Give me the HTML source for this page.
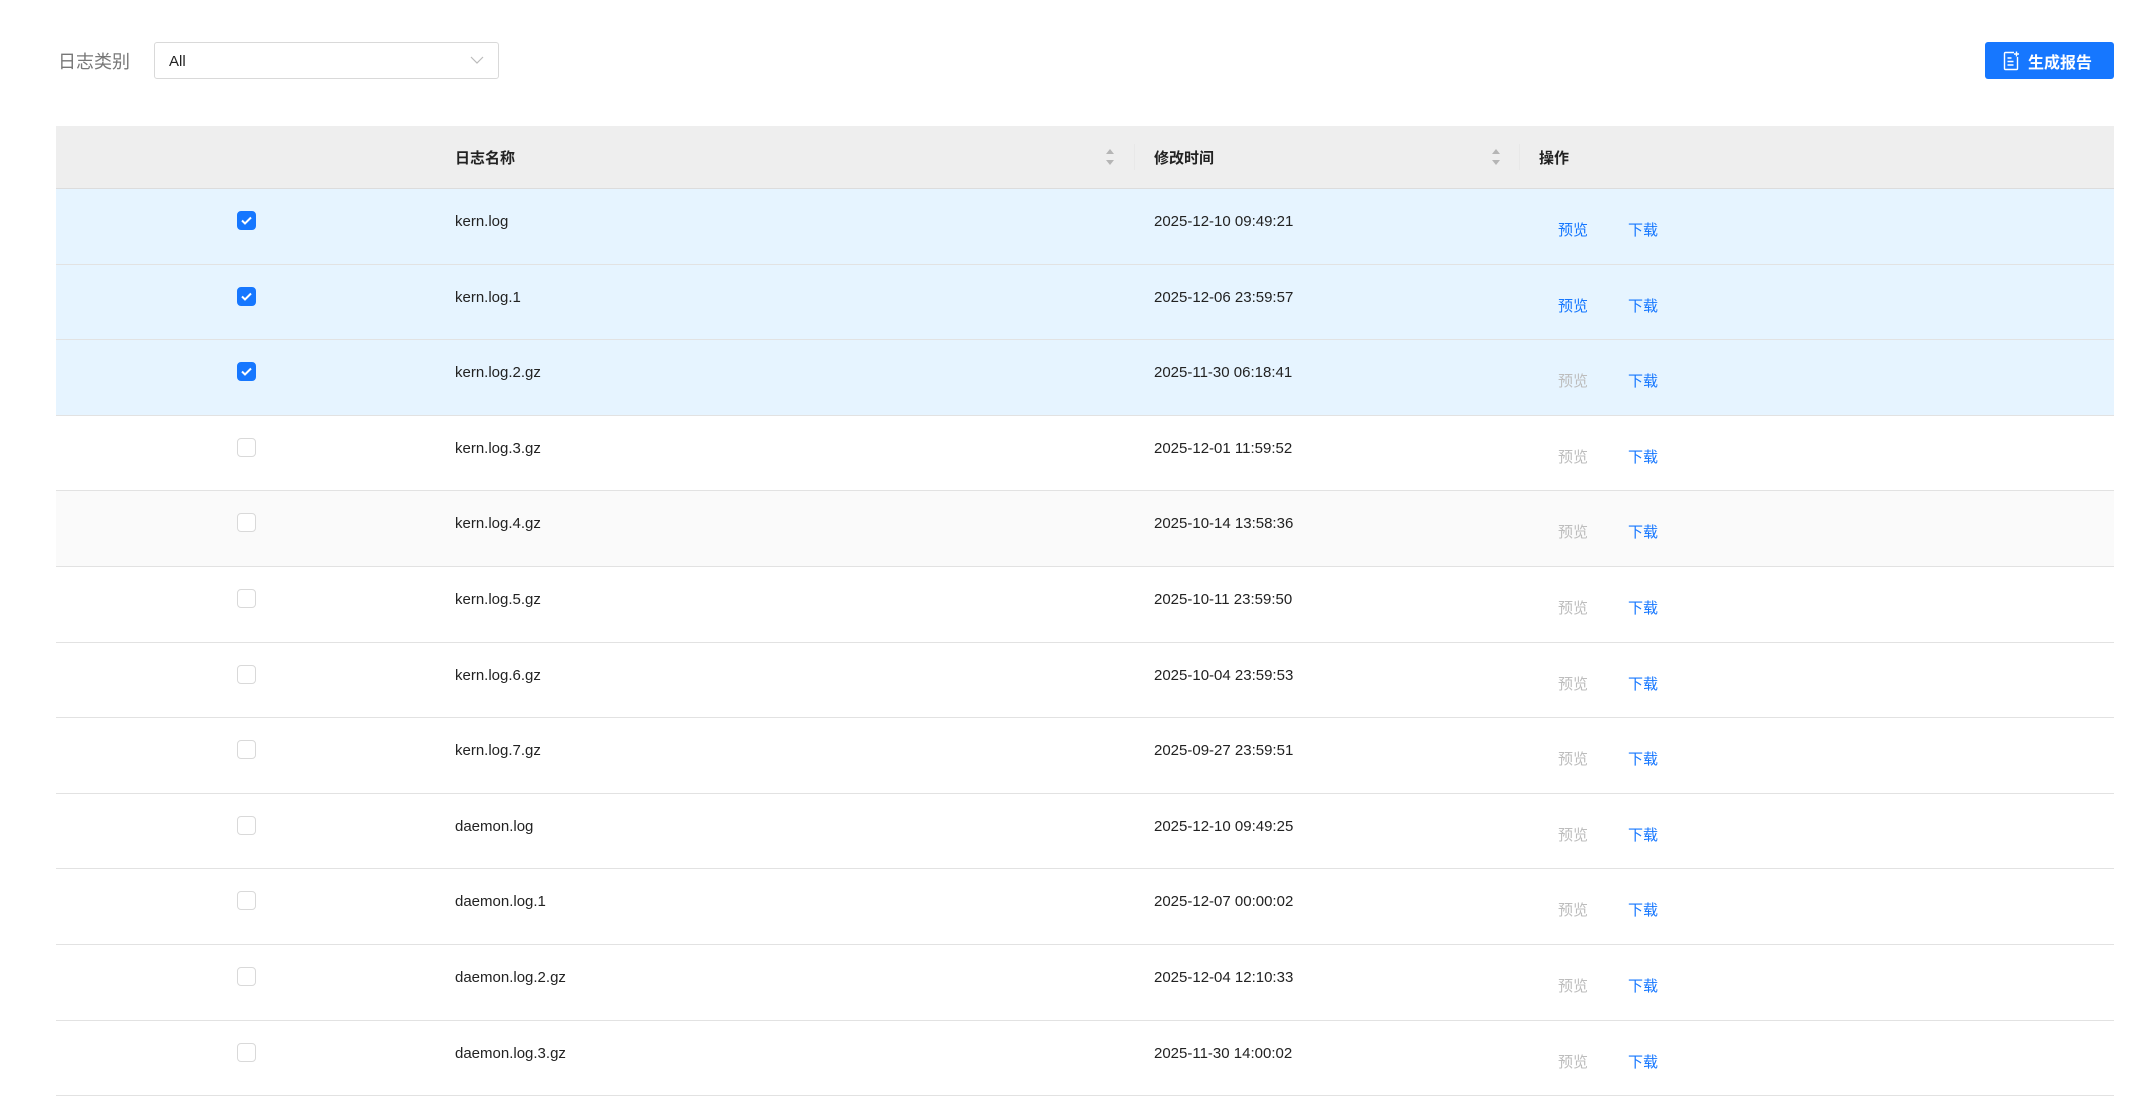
<!DOCTYPE html>
<html><head><meta charset="utf-8">
<style>
*{margin:0;padding:0;box-sizing:border-box}
body{width:2147px;height:1067px;overflow:hidden;background:#fff;font-family:"Liberation Sans","Noto Sans CJK SC",sans-serif;color:#222;position:relative}
.lbl{position:absolute;left:58px;top:48px;font-size:18px;color:#777}
.sel{position:absolute;left:154px;top:42px;width:345px;height:37px;border:1px solid #d9d9d9;border-radius:3px;font-size:15px;padding:10px 0 0 14px;color:#222}
.sel svg{position:absolute;right:14px;top:12px}
.btn{position:absolute;left:1985px;top:42px;width:129px;height:37px;background:#1677ff;border-radius:3px;color:#fff;font-size:16px;font-weight:bold;display:flex;align-items:center;padding-left:18px}
.btn svg{margin-right:9px}
.tbl{position:absolute;left:56px;top:126px;width:2058px}
.hd{height:63px;background:#eeeeee;border-bottom:1px solid #dcdcdc;position:relative;font-size:15px;font-weight:bold}
.row{height:75.6px;border-bottom:1px solid #e2e2e2;position:relative;font-size:15px}
.sel1{background:#e6f4ff}
.hov{background:#fafafa}
.c{position:absolute}
.cb{position:absolute;left:181px;top:22px;width:19px;height:19px;border:1px solid #d9d9d9;border-radius:4px;background:#fff}
.cb.on{background:#1677ff;border-color:#1677ff}
.nm{left:399px;top:24px}
.tm{left:1098px;top:24px}
.pv{left:1502px;top:30px;color:#1677ff}
.pv.dis{color:#bdbdbd}
.dl{left:1572px;top:30px;color:#1677ff}
.sort{position:absolute;top:19px}
.sep{position:absolute;top:18px;width:1px;height:26px;background:#e8e8e8}
</style></head><body>
<div class="lbl">日志类别</div>
<div class="sel">All<svg width="14" height="10" viewBox="0 0 14 10"><path d="M1 2l6 6 6-6" fill="none" stroke="#bbb" stroke-width="1.2"/></svg></div>
<div class="btn"><svg width="16" height="20" viewBox="0 0 16 20"><path d="M11 1.5H2.5a1 1 0 0 0-1 1v15a1 1 0 0 0 1 1h11a1 1 0 0 0 1-1V6" fill="none" stroke="#fff" stroke-width="1.4"/><path d="M4.5 7h4M4.5 10.5h6M4.5 14h6" stroke="#fff" stroke-width="1.4"/><path d="M13.5 0.5v5M11 3h5" stroke="#fff" stroke-width="1.4"/></svg>生成报告</div>
<div class="tbl">
<div class="hd">
<div class="c" style="left:399px;top:21px">日志名称</div>
<svg class="sort" style="left:1049px" width="10" height="24" viewBox="0 0 10 24"><path d="M5 4l4 5H1z M5 20l4-5H1z" fill="#b5b5b5"/></svg>
<div class="sep" style="left:1078px"></div>
<div class="c" style="left:1098px;top:21px">修改时间</div>
<svg class="sort" style="left:1435px" width="10" height="24" viewBox="0 0 10 24"><path d="M5 4l4 5H1z M5 20l4-5H1z" fill="#b5b5b5"/></svg>
<div class="sep" style="left:1463px"></div>
<div class="c" style="left:1483px;top:21px">操作</div>
</div>
<div class="row sel1"><div class="cb on"><svg width="17" height="17" viewBox="0 0 17 17"><path d="M4 8.5l3 3 6-6" fill="none" stroke="#fff" stroke-width="2"/></svg></div><div class="c nm">kern.log</div><div class="c tm">2025-12-10 09:49:21</div><div class="c pv">预览</div><div class="c dl">下载</div></div>
<div class="row sel1"><div class="cb on"><svg width="17" height="17" viewBox="0 0 17 17"><path d="M4 8.5l3 3 6-6" fill="none" stroke="#fff" stroke-width="2"/></svg></div><div class="c nm">kern.log.1</div><div class="c tm">2025-12-06 23:59:57</div><div class="c pv">预览</div><div class="c dl">下载</div></div>
<div class="row sel1"><div class="cb on"><svg width="17" height="17" viewBox="0 0 17 17"><path d="M4 8.5l3 3 6-6" fill="none" stroke="#fff" stroke-width="2"/></svg></div><div class="c nm">kern.log.2.gz</div><div class="c tm">2025-11-30 06:18:41</div><div class="c pv dis">预览</div><div class="c dl">下载</div></div>
<div class="row"><div class="cb"></div><div class="c nm">kern.log.3.gz</div><div class="c tm">2025-12-01 11:59:52</div><div class="c pv dis">预览</div><div class="c dl">下载</div></div>
<div class="row hov"><div class="cb"></div><div class="c nm">kern.log.4.gz</div><div class="c tm">2025-10-14 13:58:36</div><div class="c pv dis">预览</div><div class="c dl">下载</div></div>
<div class="row"><div class="cb"></div><div class="c nm">kern.log.5.gz</div><div class="c tm">2025-10-11 23:59:50</div><div class="c pv dis">预览</div><div class="c dl">下载</div></div>
<div class="row"><div class="cb"></div><div class="c nm">kern.log.6.gz</div><div class="c tm">2025-10-04 23:59:53</div><div class="c pv dis">预览</div><div class="c dl">下载</div></div>
<div class="row"><div class="cb"></div><div class="c nm">kern.log.7.gz</div><div class="c tm">2025-09-27 23:59:51</div><div class="c pv dis">预览</div><div class="c dl">下载</div></div>
<div class="row"><div class="cb"></div><div class="c nm">daemon.log</div><div class="c tm">2025-12-10 09:49:25</div><div class="c pv dis">预览</div><div class="c dl">下载</div></div>
<div class="row"><div class="cb"></div><div class="c nm">daemon.log.1</div><div class="c tm">2025-12-07 00:00:02</div><div class="c pv dis">预览</div><div class="c dl">下载</div></div>
<div class="row"><div class="cb"></div><div class="c nm">daemon.log.2.gz</div><div class="c tm">2025-12-04 12:10:33</div><div class="c pv dis">预览</div><div class="c dl">下载</div></div>
<div class="row"><div class="cb"></div><div class="c nm">daemon.log.3.gz</div><div class="c tm">2025-11-30 14:00:02</div><div class="c pv dis">预览</div><div class="c dl">下载</div></div>
</div>
</body></html>
